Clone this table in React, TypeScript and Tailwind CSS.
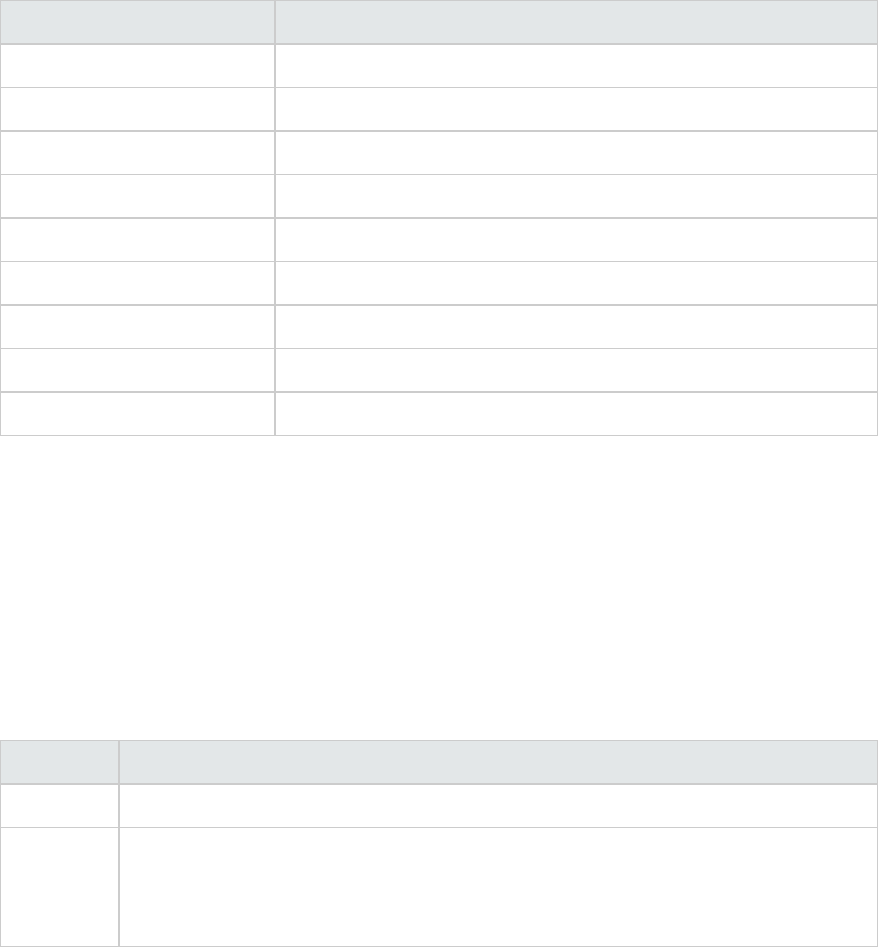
export default function App() {
  const rows = [1, 2, 3, 4, 5, 6, 7, 8, 9];
  return (
    <div className="w-[879px] h-[948px] bg-white">
      {/* first table */}
      <div className="w-[878px] border border-[#cccccc]">
        <div className="flex h-[44px] bg-[#e3e7e8] border-b-2 border-[#cccccc]">
          <div className="w-[275px] border-r-2 border-[#cccccc]" />
          <div className="flex-1" />
        </div>
        {rows.map((r) => (
          <div
            key={r}
            className={
              r === 9
                ? 'flex h-[42px]'
                : r % 2 === 0
                  ? 'flex h-[44px] border-b-2 border-[#cccccc]'
                  : 'flex h-[43px] border-b border-[#cccccc]'
            }
          >
            <div className="w-[275px] border-r-2 border-[#cccccc]" />
            <div className="flex-1" />
          </div>
        ))}
      </div>

      {/* second table */}
      <div className="mt-[304px] w-[878px] border border-[#cccccc]">
        <div className="flex h-[44px] bg-[#e3e7e8] border-b-2 border-[#cccccc]">
          <div className="w-[119px] border-r-2 border-[#cccccc]" />
          <div className="flex-1" />
        </div>
        <div className="flex h-[43px] border-b border-[#cccccc]">
          <div className="w-[119px] border-r-2 border-[#cccccc]" />
          <div className="flex-1" />
        </div>
        <div className="flex h-[118px]">
          <div className="w-[119px] border-r-2 border-[#cccccc]" />
          <div className="flex-1" />
        </div>
      </div>
    </div>
  );
}
